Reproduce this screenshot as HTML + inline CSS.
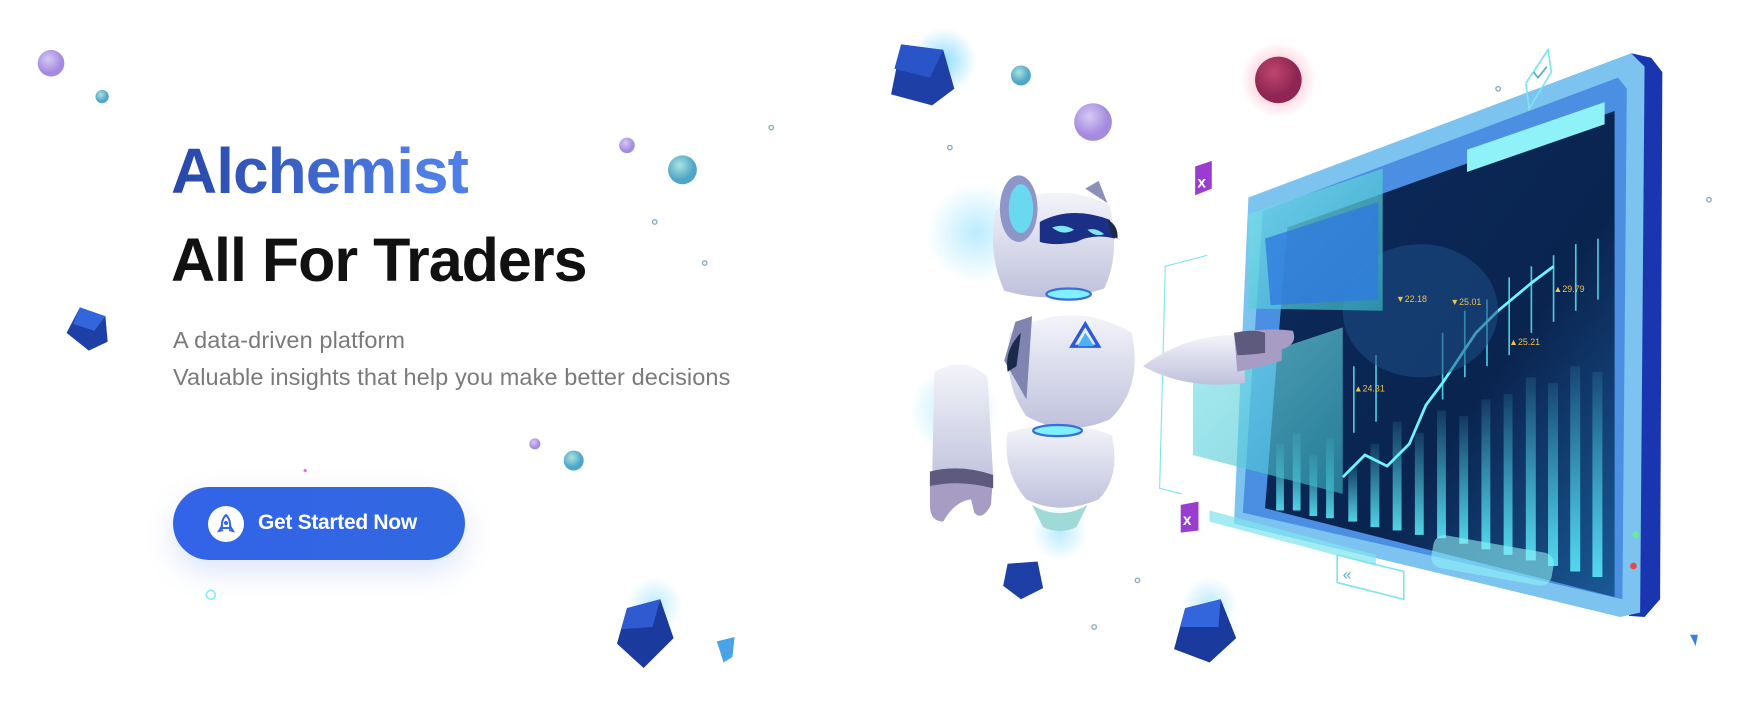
<!DOCTYPE html>
<html><head><meta charset="utf-8"><style>
html,body{margin:0;padding:0;width:1740px;height:708px;overflow:hidden;background:#fff;font-family:"Liberation Sans",sans-serif}
svg.bg{position:absolute;left:0;top:0;width:1740px;height:708px}
.t1{position:absolute;left:171px;top:136px;font-size:64px;font-weight:bold;letter-spacing:-1px;background:linear-gradient(90deg,#2746a8,#4f7fe6 85%);-webkit-background-clip:text;color:transparent;line-height:70px}
.t2{position:absolute;left:171px;top:224px;font-size:61px;font-weight:bold;color:#111;letter-spacing:-1px;line-height:72px}
.sub{position:absolute;left:173px;top:322px;font-size:23.5px;color:#7a7a7a;line-height:37px;letter-spacing:0.1px}
.btn{position:absolute;left:173px;top:487px;width:292px;height:73px;border-radius:37px;background:linear-gradient(90deg,#3363e8,#3168e0);box-shadow:0 12px 30px rgba(60,110,230,.18)}
.btn .ic{position:absolute;left:35px;top:19px;width:36px;height:36px;border-radius:50%;background:#fff}
.btn span{position:absolute;left:85px;top:24px;color:#fff;font-size:21px;font-weight:bold;letter-spacing:-0.3px}
</style></head><body>
<svg class="bg" viewBox="0 0 1568 638" preserveAspectRatio="none">
<defs>
<radialGradient id="gp" cx=".4" cy=".35"><stop offset="0" stop-color="#d6c8f5"/><stop offset="1" stop-color="#a58be0"/></radialGradient>
<radialGradient id="gt" cx=".4" cy=".35"><stop offset="0" stop-color="#a9e3df"/><stop offset="1" stop-color="#4fa6c6"/></radialGradient>
<radialGradient id="gm" cx=".4" cy=".35"><stop offset="0" stop-color="#c0466e"/><stop offset="1" stop-color="#8e2553"/></radialGradient>
<radialGradient id="glow"><stop offset="0" stop-color="#5fd0ff" stop-opacity=".7"/><stop offset="1" stop-color="#5fd0ff" stop-opacity="0"/></radialGradient>
<radialGradient id="glowr"><stop offset="0" stop-color="#ff4d7a" stop-opacity=".5"/><stop offset="1" stop-color="#ff4d7a" stop-opacity="0"/></radialGradient>
<linearGradient id="scr" x1="0" y1="0" x2="1" y2="1"><stop offset="0" stop-color="#0c2a5a"/><stop offset=".6" stop-color="#0a2450"/><stop offset="1" stop-color="#1a5a96"/></linearGradient>
<linearGradient id="bars" x1="0" y1="0" x2="0" y2="1"><stop offset="0" stop-color="#5ef0ff" stop-opacity=".1"/><stop offset="1" stop-color="#5ef0ff" stop-opacity=".85"/></linearGradient>
<linearGradient id="bot" x1="0" y1="0" x2="0" y2="1"><stop offset="0" stop-color="#f3f4fa"/><stop offset="1" stop-color="#bfc1dc"/></linearGradient>
<linearGradient id="panel" x1="0" y1="0" x2="1" y2="1"><stop offset="0" stop-color="#7fe4ec" stop-opacity=".9"/><stop offset="1" stop-color="#38b7c6" stop-opacity=".8"/></linearGradient>
</defs>
<circle cx="1152" cy="72" r="34" fill="url(#glowr)"/>
<circle cx="850" cy="55" r="30" fill="url(#glow)"/>
<circle cx="880" cy="210" r="45" fill="url(#glow)" opacity=".6"/>
<circle cx="860" cy="370" r="40" fill="url(#glow)" opacity=".6"/>
<circle cx="955" cy="480" r="25" fill="url(#glow)" opacity=".6"/>
<circle cx="590" cy="545" r="25" fill="url(#glow)" opacity=".6"/>
<circle cx="1090" cy="545" r="25" fill="url(#glow)" opacity=".6"/>
<circle cx="46" cy="57" r="12" fill="url(#gp)"/>
<circle cx="92" cy="87" r="6" fill="url(#gt)"/>
<circle cx="565" cy="131" r="7" fill="url(#gp)"/>
<circle cx="615" cy="153" r="13" fill="url(#gt)"/>
<circle cx="482" cy="400" r="5" fill="url(#gp)"/>
<circle cx="517" cy="415" r="9" fill="url(#gt)"/>
<circle cx="920" cy="68" r="9" fill="url(#gt)"/>
<circle cx="985" cy="110" r="17" fill="url(#gp)"/>
<circle cx="1152" cy="72" r="21" fill="url(#gm)"/>
<g fill="none" stroke="#8ab" stroke-width="1.2">
<circle cx="590" cy="200" r="2"/><circle cx="635" cy="237" r="2"/><circle cx="695" cy="115" r="2"/><circle cx="856" cy="133" r="2"/><circle cx="1130" cy="200" r="2"/><circle cx="1350" cy="80" r="2"/><circle cx="1540" cy="180" r="2"/><circle cx="986" cy="565" r="2"/><circle cx="1025" cy="523" r="2"/><circle cx="1090" cy="585" r="2"/></g>
<polygon points="812,40 850,45 860,80 840,95 803,85" fill="#1d3fa6"/><polygon points="812,40 850,45 838,70 806,62" fill="#2a55c9"/>
<polygon points="72,277 95,285 97,308 80,316 60,300" fill="#1d3fa6"/><polygon points="72,277 95,285 85,298 66,292" fill="#3366dd"/>
<polygon points="565,548 595,540 607,575 580,602 556,580" fill="#1a3a9e"/><polygon points="565,548 595,540 588,565 560,567" fill="#2f5bd0"/>
<polygon points="1068,548 1100,540 1114,575 1090,597 1058,585" fill="#1a3a9e"/><polygon points="1068,548 1100,540 1098,565 1064,565" fill="#3366dd"/>
<polygon points="908,508 935,506 940,530 920,540 904,528" fill="#1d3fa6"/>
<polygon points="646,578 662,574 660,592 652,597" fill="#4aa3e8"/>
<polygon points="1523,572 1530,572 1528,582" fill="#3a7ee8"/>
<polygon points="1470,48 1488,52 1498,65 1496,540 1482,556 1468,555" fill="#1a35b0"/>
<polygon points="1125,178 1470,48 1482,60 1478,552 1460,556 1112,472" fill="#7cc3f0"/>
<polygon points="1138,190 1458,70 1466,80 1462,540 1120,462" fill="#4a8fe2"/>
<polygon points="1160,205 1455,100 1455,538 1140,458" fill="url(#scr)"/>
<polygon points="1322,135 1446,92 1446,112 1322,155" fill="#8ff2f8"/>
<g fill="url(#bars)">
<rect x="1150" y="400" width="7" height="60"/><rect x="1165" y="390" width="7" height="70"/><rect x="1180" y="410" width="7" height="55"/><rect x="1195" y="395" width="7" height="72"/><rect x="1215" y="420" width="8" height="50"/><rect x="1235" y="400" width="8" height="75"/><rect x="1255" y="380" width="8" height="98"/><rect x="1275" y="390" width="8" height="92"/><rect x="1295" y="370" width="8" height="115"/><rect x="1315" y="375" width="8" height="115"/><rect x="1335" y="360" width="8" height="135"/><rect x="1355" y="355" width="8" height="145"/><rect x="1375" y="340" width="9" height="165"/><rect x="1395" y="345" width="9" height="165"/><rect x="1415" y="330" width="9" height="185"/><rect x="1435" y="335" width="9" height="185"/></g>
<g stroke="#5ef0ff" stroke-width="1.5" opacity=".8"><line x1="1300" y1="300" x2="1300" y2="360"/><line x1="1320" y1="280" x2="1320" y2="340"/><line x1="1340" y1="270" x2="1340" y2="330"/><line x1="1360" y1="250" x2="1360" y2="320"/><line x1="1380" y1="240" x2="1380" y2="300"/><line x1="1400" y1="230" x2="1400" y2="290"/><line x1="1420" y1="220" x2="1420" y2="280"/><line x1="1440" y1="215" x2="1440" y2="270"/><line x1="1220" y1="330" x2="1220" y2="390"/><line x1="1240" y1="320" x2="1240" y2="380"/></g>
<polyline points="1210,430 1230,410 1250,420 1270,400 1285,365 1300,345 1330,300 1350,280 1380,255 1400,240" fill="none" stroke="#6ff5ff" stroke-width="2.5"/>
<ellipse cx="1280" cy="280" rx="70" ry="60" fill="#1d4f86" opacity=".55"/>
<g fill="#f0c04a" font-family="Liberation Sans" font-size="8"><text x="1258" y="272">▼22.18</text><text x="1307" y="275">▼25.01</text><text x="1400" y="263">▲29.79</text><text x="1360" y="311">▲25.21</text><text x="1220" y="353">▲24.31</text></g>
<polygon points="1125,193 1246,152 1246,280 1125,278" fill="url(#panel)" opacity=".85"/>
<polygon points="1140,215 1242,182 1242,270 1145,275" fill="#2f7be0" opacity=".8"/>
<polygon points="1075,340 1210,295 1210,445 1075,410" fill="url(#panel)" opacity=".75"/>
<polygon points="1090,460 1240,500 1240,510 1090,470" fill="#7fe4ec" opacity=".7"/>
<rect x="1290" y="490" width="110" height="30" rx="10" fill="#8ff2f8" opacity=".6" transform="rotate(10 1345 505)"/>
<polyline points="1205,500 1265,515 1265,540 1205,525 1205,500" fill="none" stroke="#7fe4ec" stroke-width="1.5"/>
<text x="1210" y="522" fill="#5ad" font-size="14" font-family="Liberation Sans">«</text>
<polyline points="1088,230 1050,240 1050,245 1045,440 1065,445" fill="none" stroke="#7fe4ec" stroke-width="1"/>
<polyline points="1375,75 1395,45 1398,65 1378,98 1375,75" fill="none" stroke="#7fe4ec" stroke-width="1.5"/>
<path d="M1382 65 l4 5 l8 -10" fill="none" stroke="#5ab" stroke-width="1.5"/>
<circle cx="1474" cy="482" r="3" fill="#6e9"/><circle cx="1472" cy="510" r="3" fill="#e44"/>
<polygon points="1077,150 1092,145 1092,170 1077,176" fill="#9a3ccf"/><text x="1079" y="169" fill="#fff" font-size="14" font-weight="bold" font-family="Liberation Sans">x</text>
<polygon points="1064,455 1080,452 1080,478 1064,480" fill="#9a3ccf"/><text x="1066" y="473" fill="#fff" font-size="14" font-weight="bold" font-family="Liberation Sans">x</text>
<g>
<path d="M842 335 Q870 320 890 340 L895 430 Q870 445 840 430 Z" fill="url(#bot)"/>
<path d="M838 425 Q865 418 895 428 L893 455 Q885 470 878 462 L875 450 Q860 452 850 470 Q838 470 838 455 Z" fill="#a79dc4"/>
<path d="M838 425 Q865 418 895 428 L895 440 Q865 432 838 438 Z" fill="#5d5a7e"/>
<path d="M910 300 Q965 268 1020 300 Q1030 350 1000 378 Q960 395 925 375 Q903 345 910 300Z" fill="url(#bot)"/>
<path d="M915 290 L930 285 L925 360 L905 325 Z" fill="#7f84b0"/>
<path d="M920 300 q-15 15 -12 35 l8 -5 z" fill="#1b2a4a"/>
<polygon points="978,292 966,312 990,312" fill="none" stroke="#2d5bd8" stroke-width="3"/>
<polygon points="978,300 971,312 986,312" fill="#4db3f0"/>
<path d="M1030 330 Q1070 300 1120 302 L1122 345 Q1070 352 1030 330Z" fill="url(#bot)"/>
<path d="M1112 300 Q1140 295 1165 298 Q1170 310 1155 315 L1155 325 Q1140 330 1115 335 Z" fill="#a79dc4"/>
<path d="M1112 300 Q1130 296 1140 300 L1140 318 Q1125 320 1115 320Z" fill="#5d5a7e"/>
<path d="M908 390 Q955 375 1002 392 Q1010 430 990 450 Q955 465 925 450 Q903 425 908 390Z" fill="url(#bot)"/>
<ellipse cx="953" cy="388" rx="22" ry="5" fill="#7ef0ff" stroke="#3a6fd8" stroke-width="2"/>
<path d="M930 455 Q955 470 980 455 L970 475 Q955 482 940 475Z" fill="#9fd9d8"/>
<path d="M897 190 Q950 160 1000 185 Q1010 230 995 260 Q950 275 905 262 Q890 230 897 190Z" fill="url(#bot)"/>
<path d="M978 170 l12 -7 l8 20 Z" fill="#8c90b8"/>
<ellipse cx="918" cy="188" rx="17" ry="30" fill="#8e95c9"/>
<ellipse cx="920" cy="188" rx="11" ry="22" fill="#6ad8ef"/>
<path d="M937 200 Q965 185 1000 198 L1005 215 Q985 210 970 218 Q950 222 937 218Z" fill="#1b2f87"/>
<path d="M948 205 q10 -4 20 2 q-10 6 -20 -2z" fill="#7ee6f5"/><path d="M980 207 q8 -2 15 4 q-8 3 -15 -4z" fill="#7ee6f5"/>
<path d="M998 198 q10 5 9 17 l-5 -2 z" fill="#1b2a4a"/>
<ellipse cx="963" cy="265" rx="20" ry="5" fill="#7ef0ff" stroke="#3a6fd8" stroke-width="2"/>
</g>
<circle cx="190" cy="536" r="4" fill="none" stroke="#8ef" stroke-width="1.5"/>
<circle cx="275" cy="424" r="1.5" fill="#e6f"/>
</svg>
<div class="t1">Alchemist</div>
<div class="t2">All For Traders</div>
<div class="sub">A data-driven platform<br>Valuable insights that help you make better decisions</div>
<div class="btn"><div class="ic"><svg width="36" height="36" viewBox="0 0 36 36"><path d="M18 9 Q23 14 22 22 L14 22 Q13 14 18 9Z" fill="none" stroke="#3366e6" stroke-width="2"/><circle cx="18" cy="17" r="2" fill="#3366e6"/><path d="M14 20 l-3 5 l4 -1 M22 20 l3 5 l-4 -1" fill="none" stroke="#3366e6" stroke-width="2"/></svg></div><span>Get Started Now</span></div>
</body></html>
